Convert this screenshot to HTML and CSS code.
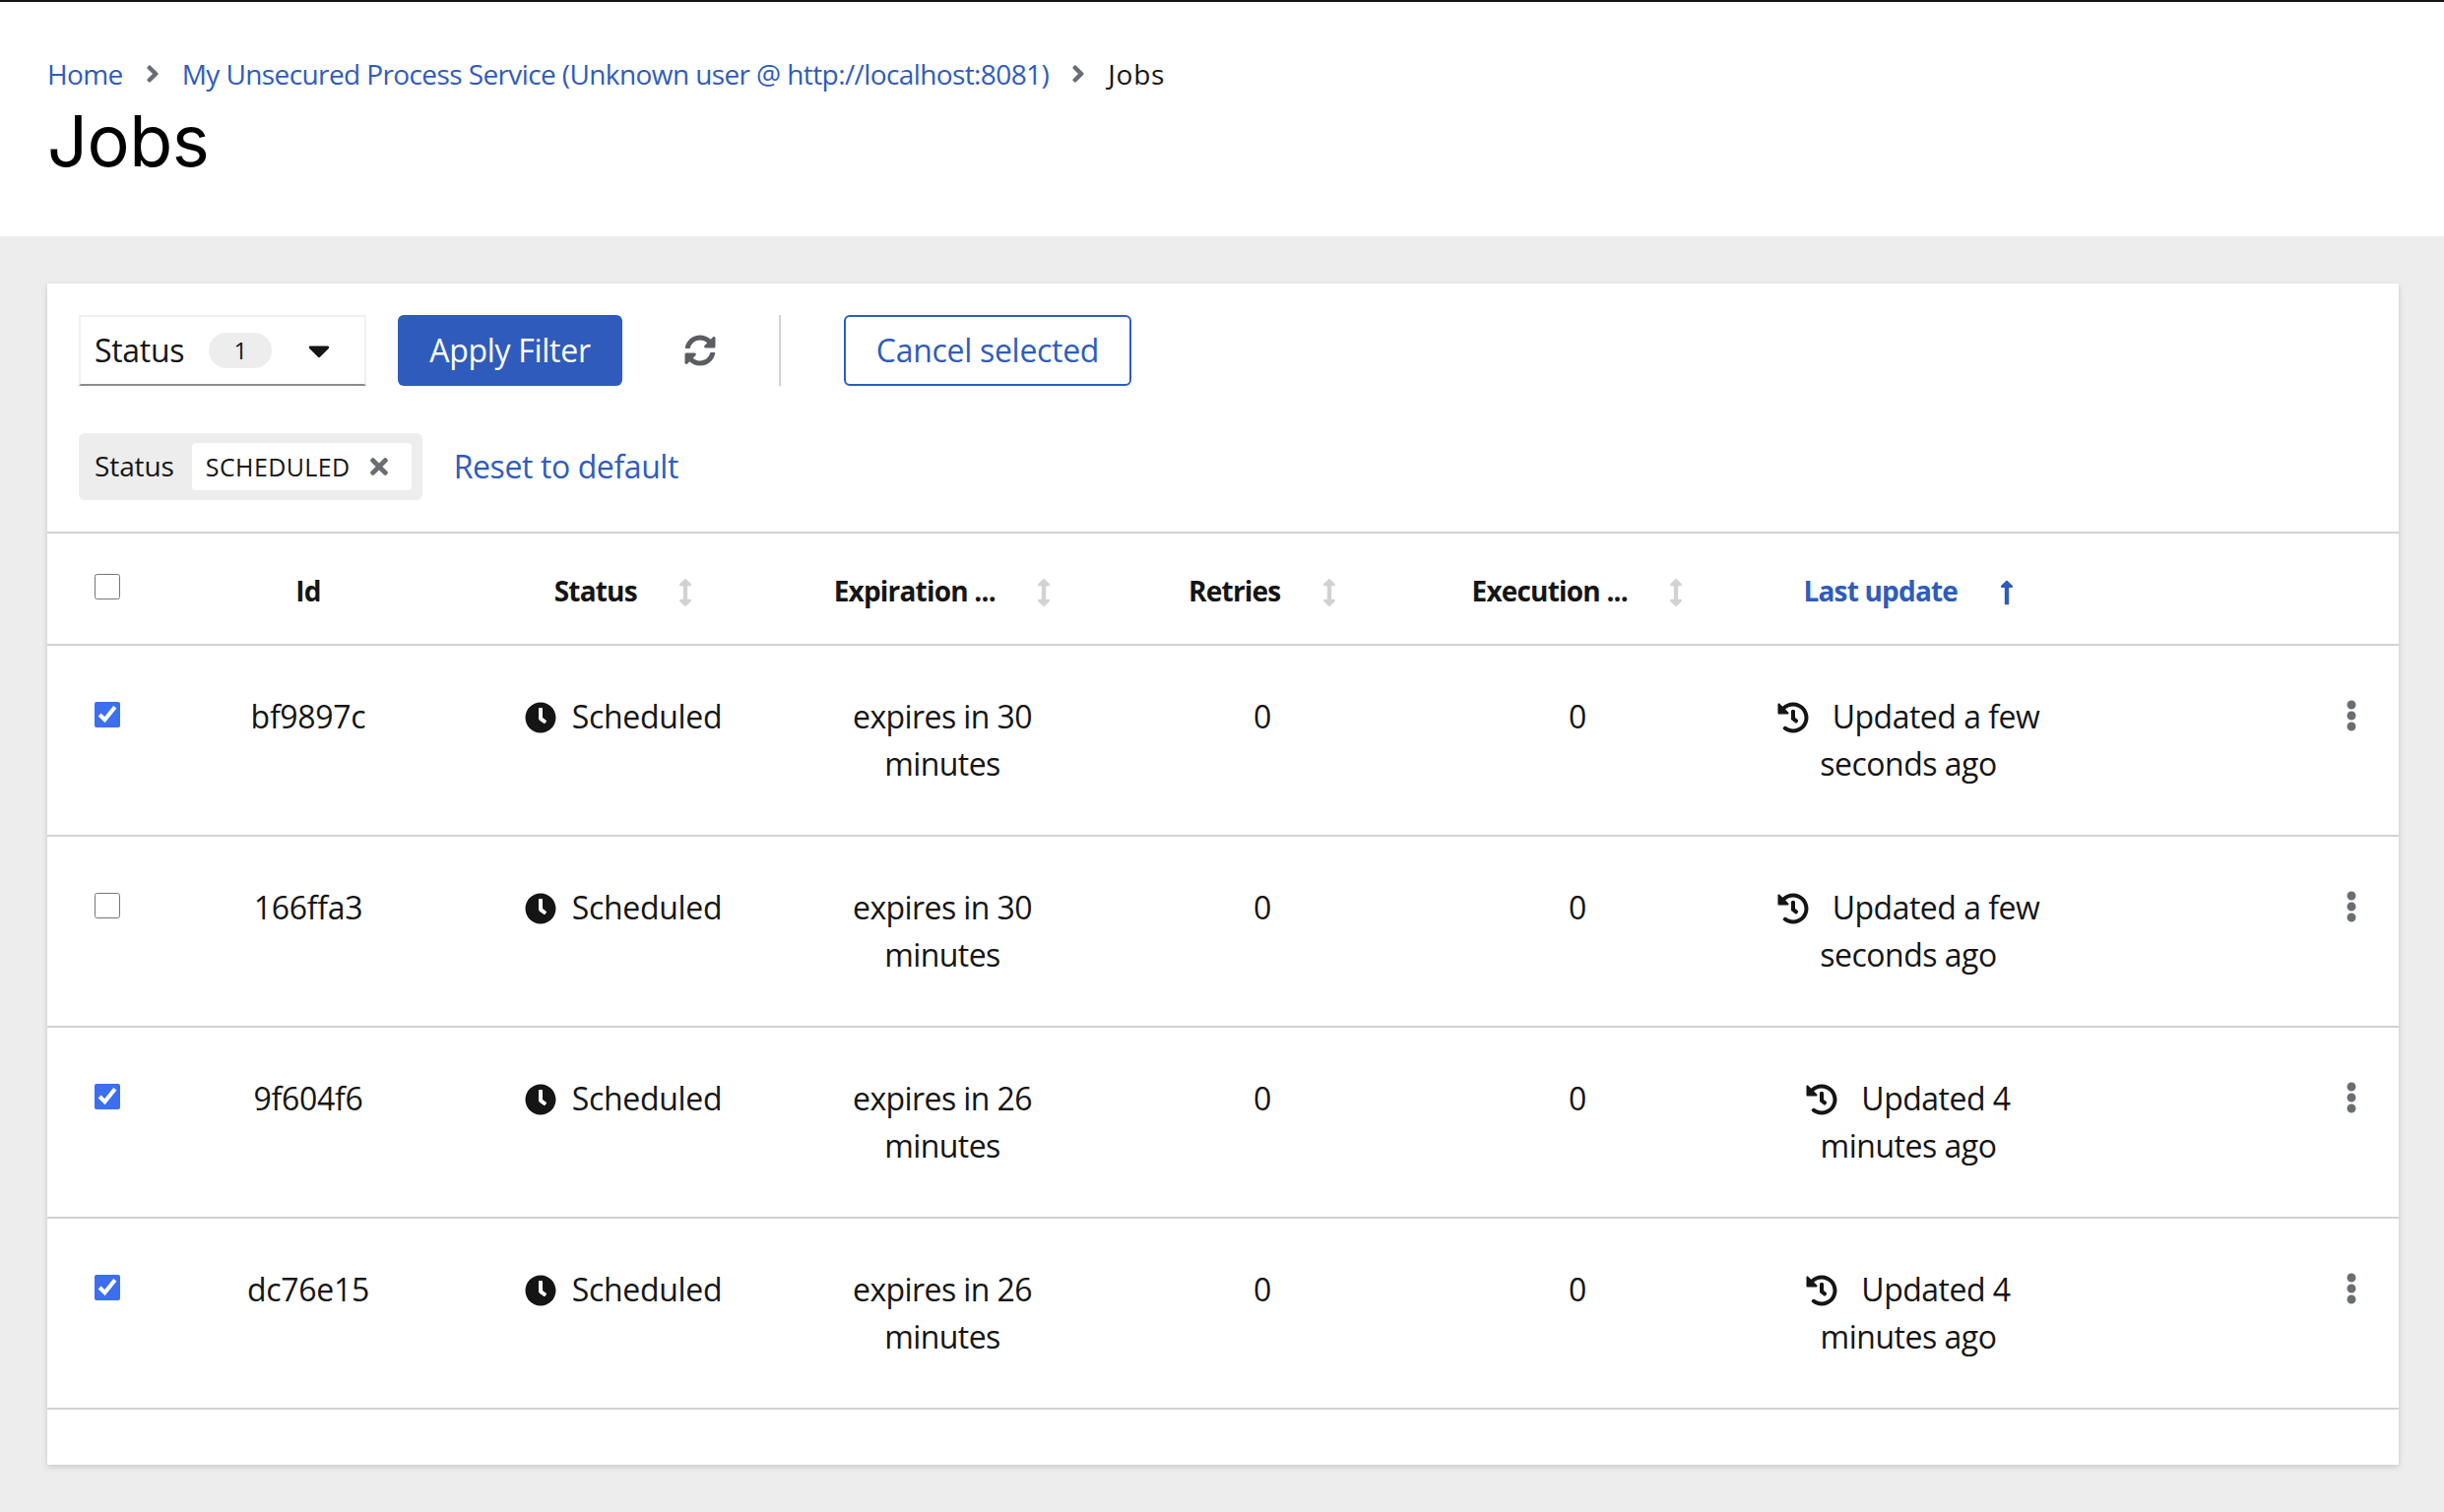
FILE: index.html
```html
<!DOCTYPE html>
<html lang="en">
<head>
    <meta charset="UTF-8">
    <meta name="viewport" content="width=device-width, initial-scale=1.0">
    <title>Jobs</title>
    <link rel="stylesheet" href="styles.css">
</head>
<body>
    <svg class="defs" aria-hidden="true">
        <symbol id="i-angle" viewBox="0 0 256 512"><path d="M224.3 273l-136 136c-9.4 9.4-24.6 9.4-33.9 0l-22.6-22.6c-9.4-9.4-9.4-24.6 0-33.9l96.4-96.4-96.4-96.4c-9.4-9.4-9.4-24.6 0-33.9L54.3 103c9.4-9.4 24.6-9.4 33.9 0l136 136c9.5 9.4 9.5 24.6.1 34z"/></symbol>
        <symbol id="i-caret" viewBox="0 0 320 512"><path d="M31.3 192h257.3c17.8 0 26.7 21.5 14.1 34.1L174.1 354.8c-7.8 7.8-20.5 7.8-28.3 0L17.2 226.1C4.6 213.5 13.5 192 31.3 192z"/></symbol>
        <symbol id="i-sync" viewBox="0 0 512 512"><path d="M370.72 133.28C339.458 104.008 298.888 87.962 255.848 88c-77.458.068-144.328 53.178-162.791 126.85-1.344 5.363-6.122 9.15-11.651 9.15H24.103c-7.498 0-13.194-6.807-11.807-14.176C33.933 94.924 134.813 8 256 8c66.448 0 126.791 26.136 171.315 68.685L463.03 40.97C478.149 25.851 504 36.559 504 57.941V192c0 13.255-10.745 24-24 24H345.941c-21.382 0-32.09-25.851-16.971-40.971l41.75-41.749zM32 296h134.059c21.382 0 32.09 25.851 16.971 40.971l-41.75 41.75c31.262 29.273 71.835 45.319 114.876 45.28 77.418-.07 144.315-53.144 162.787-126.849 1.344-5.363 6.122-9.15 11.651-9.15h57.304c7.498 0 13.194 6.807 11.807 14.176C478.067 417.076 377.187 504 256 504c-66.448 0-126.791-26.136-171.315-68.685L48.97 471.03C33.851 486.149 8 475.441 8 454.059V320c0-13.255 10.745-24 24-24z"/></symbol>
        <symbol id="i-times" viewBox="0 0 352 512"><path d="M242.72 256l100.07-100.07c12.28-12.28 12.28-32.19 0-44.48l-22.24-22.24c-12.28-12.28-32.19-12.28-44.48 0L176 189.28 75.93 89.21c-12.28-12.28-32.19-12.28-44.48 0L9.21 111.45c-12.28 12.28-12.28 32.19 0 44.48L109.28 256 9.21 356.07c-12.28 12.28-12.28 32.19 0 44.48l22.24 22.24c12.28 12.28 32.2 12.28 44.48 0L176 322.72l100.07 100.07c12.28 12.28 32.2 12.28 44.48 0l22.24-22.24c12.28-12.28 12.28-32.19 0-44.48L242.72 256z"/></symbol>
        <symbol id="i-sort" viewBox="0 0 256 512"><path d="M214.059 377.941H168V134.059h46.059c21.382 0 32.09-25.851 16.971-40.971L144.971 7.029c-9.373-9.373-24.569-9.373-33.941 0L24.971 93.088c-15.119 15.119-4.411 40.971 16.971 40.971H88v243.882H41.941c-21.382 0-32.09 25.851-16.971 40.971l86.059 86.059c9.373 9.373 24.569 9.373 33.941 0l86.059-86.059c15.12-15.119 4.412-40.971-16.97-40.971z"/></symbol>
        <symbol id="i-up" viewBox="0 0 256 512"><path d="M88 166.059V468c0 6.627 5.373 12 12 12h56c6.627 0 12-5.373 12-12V166.059h46.059c21.382 0 32.09-25.851 16.971-40.971l-86.059-86.059c-9.373-9.373-24.569-9.373-33.941 0l-86.059 86.059c-15.119 15.119-4.411 40.971 16.971 40.971H88z"/></symbol>
        <symbol id="i-clock" viewBox="0 0 512 512"><path d="M256,8C119,8,8,119,8,256S119,504,256,504,504,393,504,256,393,8,256,8Zm92.49,313h0l-20,25a16,16,0,0,1-22.49,2.5h0l-67-49.72a40,40,0,0,1-15-31.23V112a16,16,0,0,1,16-16h32a16,16,0,0,1,16,16V256l58,42.5A16,16,0,0,1,348.49,321Z"/></symbol>
        <symbol id="i-history" viewBox="0 0 512 512"><path d="M504 255.531c.253 136.64-111.18 248.372-247.82 248.468-59.015.042-113.223-20.53-155.822-54.911-11.077-8.94-11.905-25.541-1.839-35.607l11.267-11.267c8.609-8.609 22.353-9.551 31.891-1.984C173.062 425.135 212.781 440 256 440c101.705 0 184-82.311 184-184 0-101.705-82.311-184-184-184-48.814 0-93.149 18.969-126.068 49.932l50.754 50.754c10.08 10.08 2.941 27.314-11.313 27.314H24c-8.837 0-16-7.163-16-16V38.627c0-14.254 17.234-21.393 27.314-11.314l49.372 49.372C129.209 34.136 189.552 8 256 8c136.81 0 247.747 110.78 248 247.531zm-180.912 78.784l9.823-12.63c8.138-10.463 6.253-25.542-4.21-33.679L288 256.349V152c0-13.255-10.745-24-24-24h-16c-13.255 0-24 10.745-24 24v135.651l65.409 50.874c10.463 8.137 25.541 6.253 33.679-4.21z"/></symbol>
        <symbol id="i-kebab" viewBox="0 0 192 512"><path d="M96 184c39.8 0 72 32.2 72 72s-32.2 72-72 72-72-32.2-72-72 32.2-72 72-72zM24 80c0 39.8 32.2 72 72 72s72-32.2 72-72S135.8 8 96 8 24 40.2 24 80zm0 352c0 39.8 32.2 72 72 72s72-32.2 72-72-32.2-72-72-72-72 32.2-72 72z"/></symbol>
    </svg>

    <header class="page-header">
        <nav class="breadcrumb">
            <a href="#">Home</a>
            <svg class="crumb-sep"><use href="#i-angle"/></svg>
            <a href="#">My Unsecured Process Service (Unknown user @ http://localhost:8081)</a>
            <svg class="crumb-sep"><use href="#i-angle"/></svg>
            <span class="crumb-current">Jobs</span>
        </nav>
        <h1>Jobs</h1>
    </header>

    <main class="content">
        <section class="card">
            <div class="toolbar">
                <div class="select">
                    <span>Status</span>
                    <span class="count">1</span>
                    <svg class="caret"><use href="#i-caret"/></svg>
                </div>
                <button class="btn btn-primary">Apply Filter</button>
                <svg class="refresh"><use href="#i-sync"/></svg>
                <div class="divider"></div>
                <button class="btn btn-secondary">Cancel selected</button>
            </div>
            <div class="chips">
                <div class="chip-group">
                    <span class="chip-label">Status</span>
                    <span class="chip">SCHEDULED <svg class="chip-x"><use href="#i-times"/></svg></span>
                </div>
                <a href="#" class="reset">Reset to default</a>
            </div>

            <table class="jobs">
                <thead>
                    <tr>
                        <th class="col-check"><input type="checkbox" class="check head-check"></th>
                        <th class="col-id">Id</th>
                        <th class="col-status">Status <svg class="sort"><use href="#i-sort"/></svg></th>
                        <th class="col-exp">Expiration ... <svg class="sort"><use href="#i-sort"/></svg></th>
                        <th class="col-retries">Retries <svg class="sort"><use href="#i-sort"/></svg></th>
                        <th class="col-exec">Execution ... <svg class="sort"><use href="#i-sort"/></svg></th>
                        <th class="col-update active">Last update <svg class="sort"><use href="#i-up"/></svg></th>
                        <th class="col-menu"></th>
                    </tr>
                </thead>
                <tbody>
                    <tr>
                        <td><input type="checkbox" class="check" checked></td>
                        <td>bf9897c</td>
                        <td><svg class="state"><use href="#i-clock"/></svg>Scheduled</td>
                        <td class="wrap-exp">expires in 30 minutes</td>
                        <td>0</td>
                        <td>0</td>
                        <td class="wrap-update"><svg class="state history"><use href="#i-history"/></svg>Updated a few seconds ago</td>
                        <td><svg class="kebab"><use href="#i-kebab"/></svg></td>
                    </tr>
                    <tr>
                        <td><input type="checkbox" class="check"></td>
                        <td>166ffa3</td>
                        <td><svg class="state"><use href="#i-clock"/></svg>Scheduled</td>
                        <td class="wrap-exp">expires in 30 minutes</td>
                        <td>0</td>
                        <td>0</td>
                        <td class="wrap-update"><svg class="state history"><use href="#i-history"/></svg>Updated a few seconds ago</td>
                        <td><svg class="kebab"><use href="#i-kebab"/></svg></td>
                    </tr>
                    <tr>
                        <td><input type="checkbox" class="check" checked></td>
                        <td>9f604f6</td>
                        <td><svg class="state"><use href="#i-clock"/></svg>Scheduled</td>
                        <td class="wrap-exp">expires in 26 minutes</td>
                        <td>0</td>
                        <td>0</td>
                        <td class="wrap-update"><svg class="state history"><use href="#i-history"/></svg>Updated 4 minutes ago</td>
                        <td><svg class="kebab"><use href="#i-kebab"/></svg></td>
                    </tr>
                    <tr>
                        <td><input type="checkbox" class="check" checked></td>
                        <td>dc76e15</td>
                        <td><svg class="state"><use href="#i-clock"/></svg>Scheduled</td>
                        <td class="wrap-exp">expires in 26 minutes</td>
                        <td>0</td>
                        <td>0</td>
                        <td class="wrap-update"><svg class="state history"><use href="#i-history"/></svg>Updated 4 minutes ago</td>
                        <td><svg class="kebab"><use href="#i-kebab"/></svg></td>
                    </tr>
                </tbody>
            </table>
        </section>
    </main>
</body>
</html>
```

FILE: styles.css
```css
html, body {
    margin: 0;
    height: 100%;
}
body {
    font-family: "Open Sans", "Liberation Sans", sans-serif;
    font-size: 32px;
    line-height: 48px;
    letter-spacing: -0.3px;
    color: #151515;
    background: #ededed;
}
.defs {
    display: none;
}
a {
    color: #2f5cbc;
    text-decoration: none;
}

/* page header */
.page-header {
    height: 238px;
    padding: 0 48px;
    background: #fff;
    border-top: 2px solid #151515;
}
.breadcrumb {
    display: flex;
    align-items: center;
    height: 42px;
    padding-top: 52px;
    font-size: 28px;
    line-height: 42px;
    letter-spacing: -0.6px;
}
.crumb-sep {
    width: 14px;
    height: 28px;
    margin: 0 23px;
    fill: #6a6e73;
}
.crumb-current {
    letter-spacing: 0.8px;
}
h1 {
    margin: 4px 0 0;
    font-family: Inter, "Open Sans", sans-serif;
    font-size: 72px;
    font-weight: 400;
    line-height: 86px;
    letter-spacing: -0.5px;
    color: #000;
}

/* card */
.content {
    padding: 48px 46px 48px 48px;
}
.card {
    height: 1200px;
    background: #fff;
    box-shadow: 0 2px 6px rgba(3, 3, 3, 0.16);
}
.toolbar {
    display: flex;
    align-items: center;
    height: 72px;
    padding: 32px 32px 0;
}
.select {
    display: flex;
    align-items: center;
    box-sizing: border-box;
    width: 292px;
    height: 72px;
    padding: 0 14px;
    border: 2px solid #f0f0f0;
    border-bottom-color: #8a8d90;
}
.count {
    width: 64px;
    height: 36px;
    margin-left: 25px;
    border-radius: 18px;
    background: #ededed;
    font-size: 24px;
    line-height: 36px;
    text-align: center;
}
.caret {
    width: 22px;
    height: 36px;
    margin-left: 37px;
    fill: #151515;
}
.btn {
    box-sizing: border-box;
    height: 72px;
    border-radius: 6px;
    font: inherit;
    letter-spacing: inherit;
    cursor: pointer;
}
.btn-primary {
    width: 228px;
    margin-left: 32px;
    border: none;
    background: #2f5cbc;
    color: #fff;
}
.refresh {
    width: 32px;
    height: 32px;
    margin-left: 63px;
    fill: #5a5e63;
}
.divider {
    width: 2px;
    height: 72px;
    margin-left: 64px;
    background: #d2d2d2;
}
.btn-secondary {
    width: 292px;
    margin-left: 64px;
    border: 2px solid #2f5cbc;
    background: #fff;
    color: #2f5cbc;
}
.chips {
    display: flex;
    align-items: center;
    height: 68px;
    padding: 48px 32px 32px;
}
.chip-group {
    display: flex;
    align-items: center;
    box-sizing: border-box;
    height: 68px;
    padding: 0 11px 0 16px;
    border-radius: 6px;
    background: #ededed;
    font-size: 28px;
    letter-spacing: -0.1px;
}
.chip-label {
    padding-bottom: 3px;
}
.chip {
    display: flex;
    align-items: center;
    height: 48px;
    margin-left: 18px;
    padding: 0 24px 0 14px;
    border-radius: 4px;
    background: #fff;
    font-size: 25px;
    letter-spacing: 0.4px;
}
.chip-x {
    width: 18px;
    height: 26px;
    margin-left: 20px;
    fill: #6a6e73;
}
.reset {
    margin-left: 32px;
    letter-spacing: -0.4px;
}

/* table */
.jobs {
    width: 100%;
    border-collapse: collapse;
    table-layout: fixed;
    text-align: center;
}
.jobs tr {
    border-top: 2px solid #d2d2d2;
}
.jobs tbody tr:last-child {
    border-bottom: 2px solid #d2d2d2;
}
.jobs th {
    height: 109px;
    padding: 3px 0 0;
    font-size: 28px;
    font-weight: 700;
    letter-spacing: -0.8px;
}
.jobs td {
    height: 192px;
    padding: 48px 0;
    vertical-align: top;
    box-sizing: border-box;
}
.col-check { width: 142px; }
.col-id { width: 246px; }
.col-status { width: 394px; }
.col-exp { width: 254px; }
.col-retries { width: 396px; }
.col-exec { width: 244px; }
.col-update { width: 428px; }
.check {
    display: block;
    width: 26px;
    height: 26px;
    margin: 0 0 0 48px;
    accent-color: #3b6ff0;
}
.jobs td .check {
    margin-top: 9px;
}
.jobs .head-check {
    margin-top: -7px;
}
.sort {
    width: 14px;
    height: 30px;
    margin-left: 36px;
    vertical-align: -6px;
    fill: #d2d2d2;
}
.active {
    color: #2f5cbc;
}
.active .sort {
    fill: #2f5cbc;
}
.state {
    width: 32px;
    height: 32px;
    margin-right: 16px;
    vertical-align: -5px;
    fill: #151515;
}
.history {
    margin-right: 24px;
}
.wrap-exp {
    padding-left: 20px !important;
    padding-right: 20px !important;
    letter-spacing: -0.6px;
}
.wrap-update {
    padding-left: 80px !important;
    padding-right: 80px !important;
    letter-spacing: -0.5px;
}
.kebab {
    display: block;
    width: 12px;
    height: 32px;
    margin: 7px 0 0 230px;
    fill: #6a6e73;
}
```
